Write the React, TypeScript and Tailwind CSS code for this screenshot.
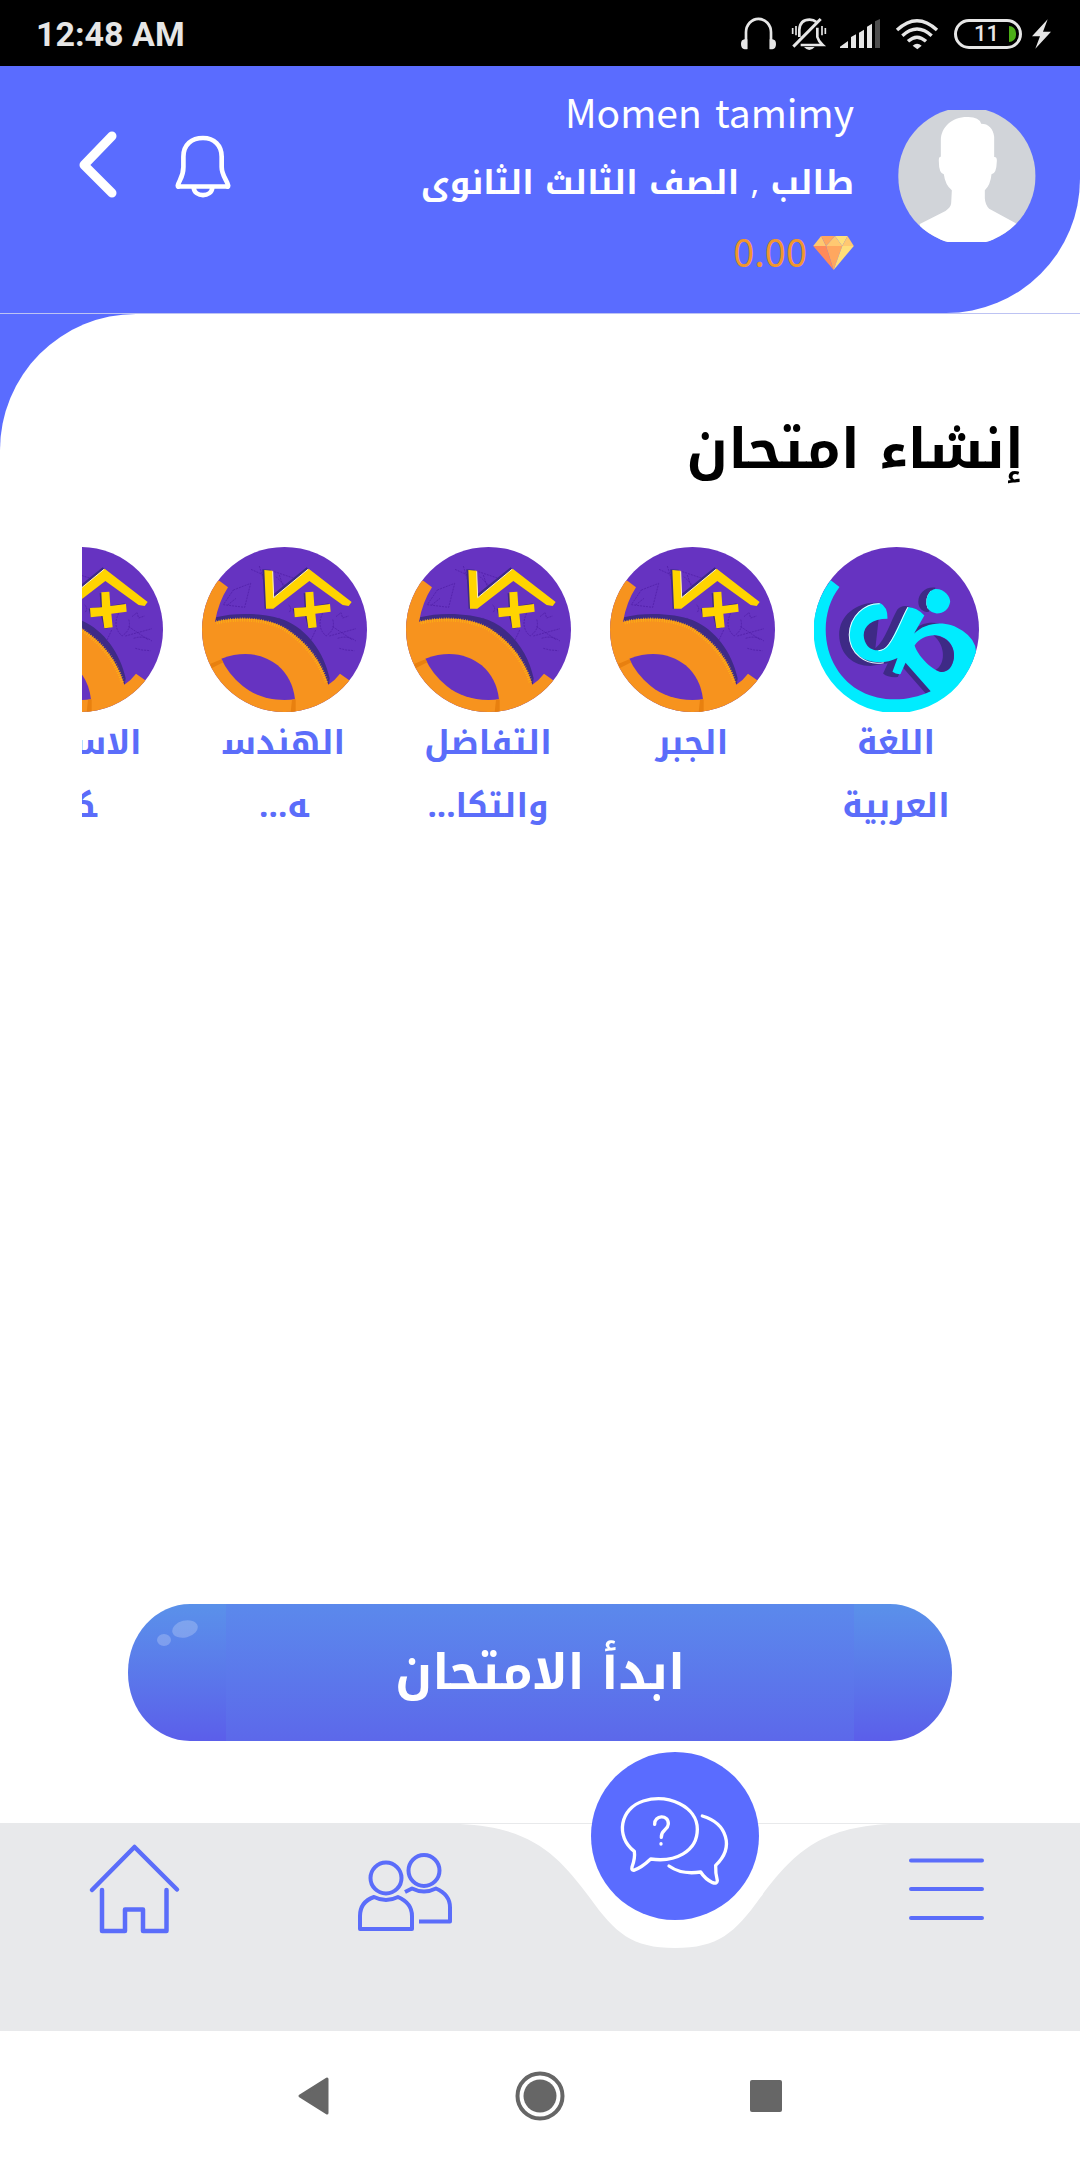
import type { ReactNode } from "react";

type Subject = { lines: string[]; art: "arabic" | "math" };

const subjects: Subject[] = [
  { lines: ["اللغة", "العربية"], art: "arabic" },
  { lines: ["الجبر"], art: "math" },
  { lines: ["التفاضل", "والتكا..."], art: "math" },
  { lines: ["الهندس\u200d", "\u200dه..."], art: "math" },
  { lines: ["الاستاتي\u200d", "\u200dكا"], art: "math" },
];

function StatusBar() {
  return (
    <div dir="ltr" className="flex h-[66px] items-center justify-between bg-black pt-[2px] pl-[36px] pr-[29px] text-[#e6e6e6]">
      <span className="font-['Roboto',sans-serif] text-[34px] leading-none font-bold">12:48 AM</span>
      <div className="flex items-center">
        <svg viewBox="30 48 111 102" className="h-[34px] w-[37px]" fill="none">
          <path d="M48 144V94a37 40 0 0 1 75 0v50" stroke="#e6e6e6" strokeWidth="8" />
          <path d="M52 115v30h-8q-11-2-11-16 0-13 11-14zM119 115v30h8q11-2 11-16 0-13-11-14z" fill="#e6e6e6" />
        </svg>
        <svg viewBox="183 48 108 102" className="ml-[14px] h-[34px] w-[36px]" fill="none" stroke="#e6e6e6" strokeWidth="8">
          <path d="M208 108V86q2-30 31-30 12 0 20 7M262 80v28q3 12 16 24H212" />
          <path d="M190 137L272 54" strokeWidth="9" />
          <path d="M188 81v18M198 75v28M276 75v28M286 81v18" strokeWidth="5" />
          <path d="M222 138h32q-16 18-32 0z" fill="#e6e6e6" stroke="none" />
        </svg>
        <svg viewBox="327 48 126 102" className="ml-[12px] h-[34px] w-[42px]" fill="#e6e6e6">
          <path d="M330 137l24-17v21h-24zM363 108l15-8v41h-15zM387 95l15-9v55h-15zM411 77l15-9v73h-15z" />
          <path d="M435 61l15-7v87h-15z" fill="#4d4d4d" />
        </svg>
        <svg viewBox="495 48 132 102" className="ml-[14px] h-[34px] w-[44px]" fill="none" stroke="#e6e6e6" strokeWidth="10">
          <path d="M501 87q60-56 120 0M517 104q44-40 88 0M534 121q27-25 54 0" />
          <path d="M548 134q13-12 27 0l-13 11z" fill="#e6e6e6" stroke="none" />
        </svg>
        <div className="ml-[15px] flex h-[30px] w-[68px] items-center justify-end gap-[10px] rounded-full border-3 border-[#e6e6e6] pr-[3px]">
          <span className="font-['Roboto',sans-serif] text-[22px] leading-none font-medium">11</span>
          <span className="h-[16px] w-[7px] rounded-r-full bg-[#4caf17]" />
        </div>
        <svg viewBox="903 54 60 90" className="ml-[9px] h-[30px] w-[20px]" fill="#e6e6e6">
          <path d="M953 55l-47 51h24l-14 37 47-51h-24z" />
        </svg>
      </div>
    </div>
  );
}

function Avatar() {
  return (
    <svg viewBox="535 60 413 396" className="mt-[44px] h-[132px] w-[138px] shrink-0" role="img" aria-label="Momen tamimy">
      <clipPath id="avatar">
        <circle cx="741" cy="258" r="206" />
      </clipPath>
      <g clipPath="url(#avatar)">
        <path d="M535 60h413v396H535z" fill="#d1d4d9" />
        <path
          d="M663 200V150C664 112 695 81 742 81Q778 80 784 101C806 101 820 115 823 140V201Q832 200 831 214 830 252 815 253 812 285 795 301V325Q796 345 808 356L888 400V460H600V402L677 363Q693 352 694 340L696 301Q676 285 672 253 657 250 657 214 656 199 663 200Z"
          fill="#fff"
        />
      </g>
    </svg>
  );
}

function Header() {
  return (
    <header className="bg-white">
      <div className="flex h-[247px] items-start rounded-br-[134px] bg-[#5a6cff] pr-[44px] pl-[76px]">
        <Avatar />
        <div className="mr-[44px] flex-1 pt-[9px] text-white">
          <p className="text-[39px] leading-[72px]">
            <span className="font-['Noto_Sans_CJK_JP','Noto_Sans',sans-serif]">Momen</span>{" "}
            <span className="font-['Noto_Sans_CJK_JP','Noto_Sans',sans-serif]">tamimy</span>
          </p>
          <p className="text-[33px] leading-[64px] font-bold">
            طالب <span className="font-normal">,</span> الصف الثالث الثانوى
          </p>
          <p className="flex items-center gap-[6px] font-['Noto_Sans_CJK_JP','Noto_Sans',sans-serif] text-[38px] leading-[72px] text-[#f0962e]">
            <svg viewBox="279 437 123 103" className="mt-[4px] h-[34px] w-[41px]">
              <path d="M303 437l15 30h-39z" fill="#ffc871" />
              <path d="M303 437h42l-27 30z" fill="#ffa65f" />
              <path d="M345 437l22 30h-49z" fill="#ffc871" />
              <path d="M345 437h38l-16 30z" fill="#ffe07c" />
              <path d="M383 437l19 30h-35z" fill="#ffc871" />
              <path d="M279 467h39l23 73z" fill="#ff8a5a" />
              <path d="M318 467h49l-26 73z" fill="#ffa75f" />
              <path d="M367 467h35l-61 73z" fill="#ffde7a" />
            </svg>
            0.00
          </p>
        </div>
        <button aria-label="الإشعارات" className="mt-[67px] ml-[56px]">
          <svg viewBox="0 0 60 70" className="h-[66px] w-[56px]" fill="none" stroke="#fff" strokeWidth="5" strokeLinejoin="round">
            <path d="M9 25C9 12 18 5 30 5s20 8 20 20v11c0 9 6 15 7 20 0 2-1 1-2 1H5c-1 0-2 1-2-1 1-5 6-9 6-20z" />
            <path d="M20 58c1 11 19 11 20 0" />
          </svg>
        </button>
        <button aria-label="رجوع" className="mt-[64px]">
          <svg viewBox="0 0 43 70" className="h-[70px] w-[43px]" fill="none" stroke="#fff" strokeWidth="9" strokeLinecap="round" strokeLinejoin="round">
            <path d="M36 6L8 35l28 28" />
          </svg>
        </button>
      </div>
    </header>
  );
}

function ArabicArt() {
  return (
    <svg viewBox="42 53 492 492" className="size-[165px]" aria-hidden="true">
      <circle cx="288" cy="299" r="246" fill="#6633c1" />
      <g fill="#3e2a86">
        <path d="M240 220C180 212 117 250 117 315C118 375 160 408 210 408L262 400L248 430Q262 443 292 441L305 410L375 490L400 480L330 380L345 240Q310 218 290 240C270 275 255 330 225 355Z" />
        <path d="M404 174C375 170 353 190 353 216C353 236 366 247 384 247Z" />
        <path d="M340 300C360 280 390 275 415 282L350 330Z" />
      </g>
      <path
        d="M92 152L118 172C65 240 65 345 108 413C165 510 290 530 390 483L315 398L300 432Q286 433 276 425L291 384C235 412 147 395 147 315C148 258 195 218 240 221Q262 232 261 267C205 267 180 300 194 335C208 370 250 368 267 340C287 305 305 260 322 232Q348 233 371 257L340 312C375 275 440 270 485 303Q525 330 525 365L523 371A246 246 0 1 1 92 152Z"
        fill="#00ecff"
      />
      <path d="M238 222C195 220 148 258 147 315C147 370 195 408 250 398M322 233C305 262 290 310 266 342Q252 362 234 362M392 184Q371 207 382 236" fill="none" stroke="#e8fdff" strokeWidth="3" />
      <path d="M342 347C355 325 385 313 410 317C450 325 463 360 459 385C455 412 440 427 420 426C392 420 350 375 342 347Z" fill="#6633c1" />
      <path d="M398 316C450 320 463 360 459 385C455 412 440 427 420 426L405 419C432 405 438 350 398 316Z" fill="#3e2a86" />
      <path d="M403 178C430 176 448 200 448 216C445 238 428 251 408 251C385 248 376 235 377 215C379 195 388 181 403 178Z" fill="#00ecff" />
    </svg>
  );
}

function MathArt() {
  return (
    <svg viewBox="18 51 495 495" className="size-[165px]" aria-hidden="true">
      <clipPath id="disc">
        <circle cx="265.5" cy="298.5" r="247.5" />
      </clipPath>
      <g clipPath="url(#disc)">
        <path d="M18 51h495v495H18z" fill="#6633c1" />
        <g fill="none" stroke="#5220a8" strokeWidth="2.5" strokeDasharray="6 3">
          <path d="M165 118l40 18M190 108l12 40M235 125l75 25M240 140l30 30M250 135l15 45M262 165l40 15M112 180l52-20-18 72-64-8zM95 225l25-20" />
          <path d="M278 225q12 10 0 24M380 250q-20 40 10 68 30-20 20-50M345 330l15-32M400 318l80-22M410 290l60 40M425 325q30-10 55 8M420 260l15-12 5 16 18-6M430 355l20 5 25 2" />
          <path d="M242 268q8-8 14 4" />
        </g>
        <path d="M57 275L60 262C120 245 215 250 265 270C335 298 385 370 401 445L398 466L350 380L200 275Z" fill="#3f2a86" />
        <path d="M70 152L96 172Q68 215 57 275C130 258 215 262 270 296C330 335 375 390 397 464Q418 450 432 431L464 454L400 560H0V152Z" fill="#f7931e" />
        <path d="M62 277C130 262 213 266 268 299C328 338 370 390 392 458" fill="none" stroke="#fdb913" strokeWidth="12" strokeDasharray="2 5" />
        <path d="M76 386C150 358 205 375 245 406Q290 445 297 508C230 515 180 500 140 468Q95 430 76 386Z" fill="#6633c1" />
        <path d="M76 388L42 402 48 414 82 397zM288 509L299 508V547H284z" fill="#e8800f" />
        <path d="M199 118L224 119L228 196L332 112L340 120L225 233L206 236ZM323 190L348 188L352 228L398 220V244L352 250L354 293L337 296L327 258L296 262L290 236L326 230Z" fill="#3f2a86" />
        <path d="M205 120L230 122L233 203L338 116L467 216L458 228L440 225L340 153L232 236L210 236Z" fill="#ffd400" />
        <path d="M230 124L233 203L336 118" fill="none" stroke="#fff6c0" strokeWidth="3" />
        <path d="M328 187L352 185L355 228L402 222L404 245L358 251L362 292L337 295L332 258L296 262L294 234L330 232Z" fill="#ffd400" />
      </g>
    </svg>
  );
}

function SubjectItem({ subject }: { subject: Subject }) {
  return (
    <li className="w-[204px] shrink-0">
      <button className="flex w-full flex-col items-center text-[33px] leading-[63px] font-bold text-[#5b6dfa]">
        {subject.art === "arabic" ? <ArabicArt /> : <MathArt />}
        {subject.lines.map((line) => (
          <span key={line} className="whitespace-nowrap">{line}</span>
        ))}
      </button>
    </li>
  );
}

function NavButton({ label, children }: { label: string; children: ReactNode }) {
  return (
    <button aria-label={label} className="flex justify-center pt-[18px]">
      {children}
    </button>
  );
}

function BottomNav() {
  return (
    <nav dir="ltr" className="grid h-[208px] grid-cols-4 items-start bg-[#e8e9eb]">
      <NavButton label="الرئيسية">
        <svg viewBox="85 1841 100 100" className="size-[100px]" fill="none" stroke="#5b6dfa" strokeWidth="4.5" strokeLinecap="round" strokeLinejoin="round">
          <path d="M92 1890l42.500-43 42.500 42.500M102 1890v41h23v-21.500h18v21.500h23.500v-41" />
        </svg>
      </NavButton>
      <NavButton label="الأصدقاء">
        <svg viewBox="355 1841 100 100" className="size-[100px]" fill="none" stroke="#5b6dfa" strokeWidth="4" strokeLinejoin="round">
          <circle cx="386" cy="1878" r="15.500" />
          <circle cx="424" cy="1870.500" r="15.500" />
          <path d="M360 1929v-13q0-14 14-19 12 6 24 0 14 6 14 19v13z" />
          <path d="M405 1892q4-2 7-3.500 12 6 24 0 14 6 14 19v14h-31" />
        </svg>
      </NavButton>
      <div className="relative flex justify-center">
        <svg viewBox="0 0 430 124" className="absolute top-[1px] left-1/2 h-[124px] w-[430px] max-w-none -translate-x-1/2" fill="#fff" aria-hidden="true">
          <path d="M0 0C72 3 99 32 130 74C155 109 172 124 215 124S275 109 300 74C331 32 358 3 430 0Z" />
        </svg>
        <button aria-label="الأسئلة" className="relative -mt-[71px] size-[168px] rounded-full bg-[#5a6cff]">
          <svg viewBox="33 21 504 504" className="size-full" fill="none" stroke="#fff" strokeWidth="10" strokeLinecap="round" strokeLinejoin="round">
            <path d="M163 319C105 275 120 190 190 168C265 145 352 185 352 253C352 320 285 353 212 342Q185 368 161 376 154 376 156 366 166 340 163 319Z" />
            <path d="M367 213C440 235 465 305 407 361Q406 385 412 407 411 418 398 413 375 402 362 381 305 390 267 363" />
            <path d="M224 238C222 210 266 207 265 237C264 256 243 254 244 277M243 296v1" />
          </svg>
        </button>
      </div>
      <NavButton label="القائمة">
        <svg viewBox="895 1841 100 100" className="size-[100px]" stroke="#5b6dfa" strokeWidth="4" strokeLinecap="round">
          <path d="M911 1860.500h71M911 1889h71M911 1918h71" />
        </svg>
      </NavButton>
    </nav>
  );
}

function SystemNav() {
  return (
    <div dir="ltr" className="flex h-[129px] items-center justify-center bg-white">
      <button aria-label="Back" className="flex w-[226px] justify-center">
        <svg viewBox="0 0 32 38" className="h-[38px] w-[32px]" fill="#666" stroke="#666" strokeWidth="3" strokeLinejoin="round">
          <path d="M2 19L29 2v34z" />
        </svg>
      </button>
      <button aria-label="Home" className="flex w-[226px] justify-center">
        <svg viewBox="0 0 50 50" className="size-[50px]">
          <circle cx="25" cy="25" r="22.500" fill="none" stroke="#666" strokeWidth="4" />
          <circle cx="25" cy="25" r="16.500" fill="#666" />
        </svg>
      </button>
      <button aria-label="Recents" className="flex w-[226px] justify-center">
        <span className="size-[32px] rounded-[2px] bg-[#666]" />
      </button>
    </div>
  );
}

export default function App() {
  return (
    <div dir="rtl" className="flex min-h-screen flex-col bg-white font-['Noto_Kufi_Arabic','DejaVu_Sans',sans-serif]">
      <StatusBar />
      <Header />
      <div className="flex flex-1 flex-col border-t border-[#bdc3f3] bg-linear-to-b from-[#5a6cff] from-[137px] to-white to-[137px]">
        <main className="flex flex-1 flex-col rounded-tl-[136px] bg-white pb-[82px]">
          <h1 className="mt-[82px] pr-[56px] text-[55px] leading-[108px] font-bold text-black">إنشاء امتحان</h1>
          <ul className="mx-[82px] mt-[43px] flex overflow-hidden">
            {subjects.map((subject) => (
              <SubjectItem key={subject.lines[0]} subject={subject} />
            ))}
          </ul>
          <button className="relative mx-[128px] mt-auto flex h-[137px] rounded-[62px/68px] bg-linear-to-b from-[#5a91ea] to-[#5b5eea] px-[98px] text-[49px] font-bold text-white">
            <span className="flex h-full flex-1 items-center justify-center bg-linear-to-b from-[#5b89ec] to-[#5c68ea]">ابدأ الامتحان</span>
            <svg viewBox="0 0 44 30" className="absolute top-[14px] left-[28px] h-[30px] w-[44px]" fill="#fff" fillOpacity="0.22" aria-hidden="true">
              <ellipse cx="29" cy="11" rx="13" ry="8.500" transform="rotate(-14 29 11)" />
              <ellipse cx="8" cy="22" rx="7" ry="6" />
            </svg>
          </button>
        </main>
      </div>
      <BottomNav />
      <SystemNav />
    </div>
  );
}
